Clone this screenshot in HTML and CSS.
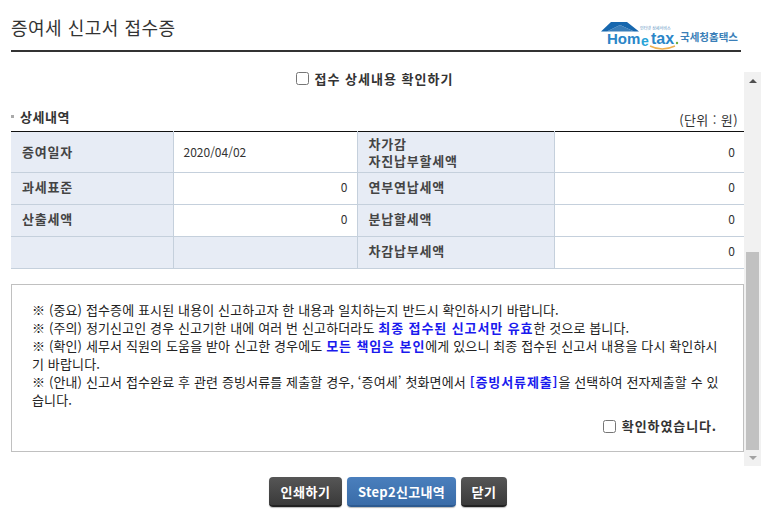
FILE: index.html
```html
<!DOCTYPE html>
<html lang="ko">
<head>
<meta charset="utf-8">
<title>증여세 신고서 접수증</title>
<link rel="stylesheet" href="styles.css">
</head>
<body>
<div class="page">
  <header class="header">
    <h1 class="title">증여세 신고서 접수증</h1>
    <svg class="logo" width="141" height="32" viewBox="0 0 141 32" aria-label="Hometax 국세청홈택스">
      <path d="M1 12.5 L11 3 L27 3 L39 12.5 L34 12.5 L20 6 L7 12.5 Z" fill="#1767ae"/>
      <path d="M20 6 L34 12.5 L7 12.5 Z" fill="#1767ae" opacity="0.85"/>
      <text x="7" y="25" class="logo-home">Hom</text>
      <text x="41" y="27" class="logo-e">e</text>
      <text x="51" y="25" class="logo-tax">tax</text>
      <circle cx="77" cy="24" r="1.2" fill="#6fae3c"/>
      <path d="M50 27 Q62 33 75 27" stroke="#f0b050" stroke-width="1.4" fill="none"/>
      <text x="40" y="10.5" class="logo-tiny">인터넷 상세서비스</text>
      <text x="80" y="22" class="logo-kr">국세청홈택스</text>
    </svg>
  </header>

  <div class="viewport">
    <main class="content">
      <label class="confirm-top"><input type="checkbox" class="check"><span>접수 상세내용 확인하기</span></label>
      <div class="section-head">
        <h2 class="section-title">상세내역</h2>
        <span class="unit">(단위 : 원)</span>
      </div>
      <table class="detail">
        <colgroup><col class="c1"><col class="c2"><col class="c3"><col class="c4"></colgroup>
        <tr class="tall">
          <th>증여일자</th><td class="left">2020/04/02</td>
          <th>차가감<br>자진납부할세액</th><td>0</td>
        </tr>
        <tr>
          <th>과세표준</th><td>0</td>
          <th>연부연납세액</th><td>0</td>
        </tr>
        <tr>
          <th>산출세액</th><td>0</td>
          <th>분납할세액</th><td>0</td>
        </tr>
        <tr>
          <th></th><th></th>
          <th>차감납부세액</th><td>0</td>
        </tr>
      </table>
      <section class="notice">
        <p>※ (중요) 접수증에 표시된 내용이 신고하고자 한 내용과 일치하는지 반드시 확인하시기 바랍니다.</p>
        <p>※ (주의) 정기신고인 경우 신고기한 내에 여러 번 신고하더라도 <b>최종 접수된 신고서만 유효</b>한 것으로 봅니다.</p>
        <p>※ (확인) 세무서 직원의 도움을 받아 신고한 경우에도 <b>모든 책임은 본인</b>에게 있으니 최종 접수된 신고서 내용을 다시 확인하시<br>기 바랍니다.</p>
        <p>※ (안내) 신고서 접수완료 후 관련 증빙서류를 제출할 경우, ‘증여세’ 첫화면에서 <b>[증빙서류제출]</b>을 선택하여 전자제출할 수 있<br>습니다.</p>
        <label class="confirm-bottom"><input type="checkbox" class="check"><span>확인하였습니다.</span></label>
      </section>
    </main>
    <div class="scrollbar">
      <span class="arrow up"></span>
      <span class="track"></span>
      <span class="thumb"></span>
      <span class="arrow down"></span>
    </div>
  </div>

  <footer class="actions">
    <button class="btn dark btn-print" type="button">인쇄하기</button>
    <button class="btn blue btn-step" type="button">Step2신고내역</button>
    <button class="btn dark btn-close" type="button">닫기</button>
  </footer>
</div>
</body>
</html>
```

FILE: styles.css
```css
* { box-sizing: border-box; }
html, body { margin: 0; padding: 0; background: #fff; }
body {
  font-family: "Noto Sans CJK KR", "Liberation Sans", sans-serif;
  font-size: 13px;
  color: #222;
  width: 770px;
  height: 514px;
  overflow: hidden;
}
.page { width: 770px; height: 514px; display: flex; flex-direction: column; }

.header {
  margin: 0 29px 0 11px;
  height: 52px;
  border-bottom: 2px solid #333;
  display: flex;
  justify-content: space-between;
  align-items: flex-start;
}
.title { margin: 16px 0 0; font-size: 18px; line-height: 22px; font-weight: 400; letter-spacing: 0.5px; color: #333; }
.logo { margin: 19px 0 0; display: block; }
.logo-home { font: 700 15px "Liberation Sans", sans-serif; fill: #2a86c8; }
.logo-tax { font: 700 16px "Liberation Sans", sans-serif; fill: #2a86c8; }
.logo-e { font: 700 14px "Liberation Sans", sans-serif; fill: #28a4d8; }
.logo-tiny { font: 400 4px "Noto Sans CJK KR", sans-serif; fill: #5a8fc0; }
.logo-kr { font: 700 10.5px "Noto Sans CJK KR", sans-serif; fill: #3b7fb8; }

.viewport { margin-top: 20px; height: 394px; display: flex; width: 761px; }
.content { width: 744px; padding-left: 11px; flex: none; }

.confirm-top {
  display: flex; align-items: center; justify-content: center;
  height: 16px; margin-top: -2px; padding-right: 6px;
  font-weight: 700; color: #333; gap: 6px; letter-spacing: 1px;
}
.check { width: 13px; height: 13px; margin: 0; flex: none; }

.section-head { display: flex; justify-content: space-between; align-items: center; height: 20px; margin-top: 20px; padding-right: 6px; }
.section-title { margin: 0; font-size: 13px; font-weight: 700; color: #333; display: flex; align-items: center; gap: 6px; letter-spacing: 0.5px; }
.section-title::before { content: ""; width: 3px; height: 3px; background: #aaa; }
.unit { color: #333; letter-spacing: 0.4px; margin-top: 6px; }

.detail { width: 733px; border-collapse: collapse; table-layout: fixed; border-top: 1px solid #111; margin-top: 5px; }
.c1 { width: 162px; } .c2 { width: 184px; } .c3 { width: 197px; } .c4 { width: 190px; }
.detail tr { height: 32px; }
.detail tr.tall { height: 41px; }
.detail th, .detail td { border: 1px solid #c5d0dc; border-width: 0 1px 1px 0; padding: 0 9px 4px 11px; line-height: 17px; }
.detail .tall th, .detail .tall td { padding-bottom: 1px; }
.detail th:last-child, .detail td:last-child { border-right: 0; }
.detail th { background: #e7ecf5; text-align: left; font-weight: 700; color: #444; letter-spacing: 0.8px; }
.detail td { text-align: right; color: #333; font-size: 12px; }
.detail .tall td.left { text-align: left; padding-left: 10px; }

.notice {
  margin-top: 15px;
  height: 168px;
  border: 1px solid #c0c0c0;
  padding: 16px 20px 0;
  display: flex;
  flex-direction: column;
  color: #222;
  line-height: 18px;
  letter-spacing: 0.13px;
}
.notice p { margin: 0; white-space: nowrap; }
.notice b { color: #1a1aee; letter-spacing: 0.9px; }
.confirm-bottom {
  align-self: flex-end;
  display: flex; align-items: center; gap: 6px;
  margin-top: 8px; font-weight: 700; color: #333;
  padding-right: 6px; letter-spacing: 0.9px;
}

.scrollbar { width: 17px; flex: none; background: #f1f1f1; display: flex; flex-direction: column; align-items: center; }
.arrow { width: 0; height: 0; border-left: 4px solid transparent; border-right: 4px solid transparent; flex: none; }
.arrow.up { border-bottom: 4px solid #505050; margin: 7px 0 5px; }
.arrow.down { border-top: 4px solid #a3a3a3; margin: 6px 0 6px; }
.track { height: 164px; flex: none; }
.thumb { width: 13px; flex: 1; background: #c1c1c1; }

.actions { margin-top: 11px; display: flex; justify-content: center; gap: 5px; padding-left: 6px; }
.btn {
  height: 30px; border-radius: 4px; border: 0; padding: 0;
  font: 700 13px "Noto Sans CJK KR", "Liberation Sans", sans-serif; color: #fff; letter-spacing: 0.5px;
}
.btn-print { width: 73px; }
.btn-step { width: 109px; letter-spacing: 0.3px; }
.btn-close { width: 46px; }
.btn.dark { background: linear-gradient(#565656, #3a3a3a); border-bottom: 2px solid #222; box-shadow: 0 1px 1px #bbb; }
.btn.blue { background: linear-gradient(#4a7fbd, #3a6ca8); border-bottom: 2px solid #2d5a90; box-shadow: 0 1px 1px #bbb; }
```
